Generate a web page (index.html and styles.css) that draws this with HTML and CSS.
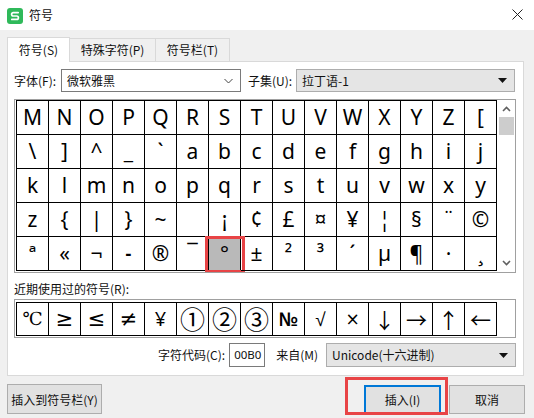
FILE: index.html
```html
<!DOCTYPE html>
<html lang="zh-CN">
<head>
    <meta charset="UTF-8">
    <meta name="viewport" content="width=device-width, initial-scale=1.0">
    <title>符号</title>
    <link rel="stylesheet" href="styles.css">
</head>
<body>
    <div class="titlebar">
        <svg class="app-icon" width="16" height="16" viewBox="0 0 16 16">
            <rect x="0" y="0" width="16" height="16" rx="3" fill="#2fb95a"/>
            <path d="M11.2 4.6 H6.3 a1.7 1.7 0 0 0 0 3.4 h3.4 a1.7 1.7 0 0 1 0 3.4 H4.8" fill="none" stroke="#fff" stroke-width="1.7" stroke-linecap="round"/>
        </svg>
        <span class="title">符号</span>
        <svg class="close" width="11" height="11" viewBox="0 0 11 11">
            <path d="M0.5 0.5 L10.5 10.5 M10.5 0.5 L0.5 10.5" stroke="#222" stroke-width="1"/>
        </svg>
    </div>

    <div class="content">
        <div class="tabs">
            <div class="tab active">符号(S)</div>
            <div class="tab tab-special">特殊字符(P)</div>
            <div class="tab tab-bar">符号栏(T)</div>
        </div>

        <div class="panel">
            <div class="font-row">
                <span class="lbl lbl-font">字体(F):</span>
                <div class="combo combo-font">
                    <span>微软雅黑</span>
                    <svg width="9" height="6" viewBox="0 0 9 6"><path d="M0.5 1 L4.5 5 L8.5 1" fill="none" stroke="#444" stroke-width="1"/></svg>
                </div>
                <span class="lbl lbl-subset">子集(U):</span>
                <div class="combo combo-gray combo-subset">
                    <span>拉丁语-1</span>
                    <svg width="9" height="5" viewBox="0 0 9 5"><path d="M0 0 H9 L4.5 5 Z" fill="#111"/></svg>
                </div>
            </div>

            <div class="charbox">
                <div class="chargrid">
                    <span>M</span><span>N</span><span>O</span><span>P</span><span>Q</span><span>R</span><span>S</span><span>T</span><span>U</span><span>V</span><span>W</span><span>X</span><span>Y</span><span>Z</span><span>[</span>
                    <span>\</span><span>]</span><span>^</span><span>_</span><span>`</span><span>a</span><span>b</span><span>c</span><span>d</span><span>e</span><span>f</span><span>g</span><span>h</span><span>i</span><span>j</span>
                    <span>k</span><span>l</span><span>m</span><span>n</span><span>o</span><span>p</span><span>q</span><span>r</span><span>s</span><span>t</span><span>u</span><span>v</span><span>w</span><span>x</span><span>y</span>
                    <span>z</span><span>{</span><span>|</span><span>}</span><span>~</span><span></span><span>¡</span><span>¢</span><span>£</span><span>¤</span><span>¥</span><span>¦</span><span>§</span><span>¨</span><span>©</span>
                    <span>ª</span><span>«</span><span>¬</span><span class="shy">-</span><span>®</span><span>¯</span><span class="selected">°</span><span>±</span><span>²</span><span>³</span><span>´</span><span>µ</span><span>¶</span><span>·</span><span>¸</span>
                </div>
                <div class="scrollbar">
                    <svg class="arrow" width="9" height="6" viewBox="0 0 9 6"><path d="M1 5 L4.5 1.5 L8 5" fill="none" stroke="#606060" stroke-width="1.6"/></svg>
                    <div class="thumb"></div>
                    <svg class="arrow arrow-down" width="9" height="6" viewBox="0 0 9 6"><path d="M1 1 L4.5 4.5 L8 1" fill="none" stroke="#606060" stroke-width="1.6"/></svg>
                </div>
            </div>

            <div class="recent-label">近期使用过的符号(R):</div>
            <div class="recentbox">
                <div class="chargrid recent">
                    <span class="serif">℃</span><span class="math">≥</span><span class="math">≤</span><span class="math">≠</span><span>¥</span><span class="circled">①</span><span class="circled">②</span><span class="circled">③</span><span class="numero">№</span><span class="root">√</span><span class="times">×</span><span class="arrow-ch">↓</span><span class="arrow-ch">→</span><span class="arrow-ch">↑</span><span class="arrow-ch">←</span>
                </div>
            </div>

            <div class="code-row">
                <span class="lbl">字符代码(C):</span>
                <div class="code-input">00B0</div>
                <span class="lbl lbl-from">来自(M)</span>
                <div class="combo combo-gray combo-from">
                    <span>Unicode(十六进制)</span>
                    <svg width="9" height="5" viewBox="0 0 9 5"><path d="M0 0 H9 L4.5 5 Z" fill="#111"/></svg>
                </div>
            </div>
        </div>

        <div class="footer">
            <button class="btn btn-bar">插入到符号栏(Y)</button>
            <div class="spacer"></div>
            <button class="btn btn-insert">插入(I)</button>
            <button class="btn btn-cancel">取消</button>
        </div>
    </div>
</body>
</html>
```

FILE: styles.css
```css
* {
    box-sizing: border-box;
}

body {
    margin: 0;
    width: 534px;
    height: 418px;
    overflow: hidden;
    background-color: #f0f0f0;
    font-family: "Noto Sans CJK SC", "Noto Sans", sans-serif;
    font-size: 12px;
    color: #111;
}

/* title bar */
.titlebar {
    height: 30px;
    background-color: #fff;
    display: flex;
    align-items: center;
    padding-left: 7px;
}
.app-icon {
    margin-top: 1px;
}
.title {
    margin-left: 6px;
    font-size: 12px;
    line-height: 16px;
}
.close {
    margin-left: auto;
    margin-right: 11px;
    margin-top: -1px;
}

.content {
    padding: 7px 10px 0 7px;
}

/* tabs */
.tabs {
    display: flex;
    align-items: flex-end;
    height: 24px;
    position: relative;
    z-index: 1;
}
.tab {
    height: 23px;
    border: 1px solid #d9d9d9;
    border-bottom: none;
    background-color: #f0f0f0;
    text-align: center;
    line-height: 22px;
    margin-left: -1px;
}
.tab.active {
    width: 63px;
    height: 25px;
    margin-left: 0;
    margin-bottom: -1px;
    background-color: #fff;
    line-height: 24px;
}
.tab-special {
    width: 87px;
}
.tab-bar {
    width: 75px;
}

.panel {
    width: 517px;
    height: 315px;
    background-color: #fff;
    border: 1px solid #d9d9d9;
    padding: 7px 7px 0 6px;
}

/* font / subset row */
.font-row {
    display: flex;
    align-items: center;
    height: 23px;
}
.lbl {
    white-space: nowrap;
    line-height: 16px;
}
.lbl-font {
    width: 47px;
}
.lbl-subset {
    width: 48px;
    margin-left: 7px;
}
.combo {
    height: 23px;
    display: flex;
    align-items: center;
    justify-content: space-between;
    border: 1px solid #7a7a7a;
    background-color: #fff;
    padding: 0 7px 0 5px;
    line-height: 16px;
}
.combo-font {
    width: 180px;
}
.combo-gray {
    background-color: #e5e5e5;
    border-color: #adadad;
}
.combo-subset {
    width: 219px;
    padding-right: 7px;
}

/* character table */
.charbox {
    margin-top: 7px;
    width: 502px;
    height: 174px;
    border: 1px solid #a0a0a0;
    padding-left: 1px;
    display: flex;
    overflow: hidden;
}
.chargrid {
    display: grid;
    grid-template-columns: repeat(15, 32px);
    grid-auto-rows: 34px;
    width: 481px;
    border-top: 1px solid #000;
    border-left: 1px solid #000;
    align-self: flex-start;
}
.chargrid span {
    border-right: 1px solid #000;
    border-bottom: 1px solid #000;
    text-align: center;
    font-family: "Noto Sans", "DejaVu Sans", sans-serif;
    font-size: 21px;
    line-height: 33px;
    color: #000;
    position: relative;
}
.chargrid .shy {
    font-weight: bold;
    font-size: 18px;
}
.chargrid .selected {
    background-color: #b9b9b9;
    border-color: #000;
}
/* red marker drawn over the selected cell */
.chargrid .selected::after {
    content: "";
    position: absolute;
    left: -4px;
    right: -5px;
    top: -1px;
    bottom: -3px;
    border: 3px solid #e84446;
}

.scrollbar {
    width: 18px;
    background-color: #fff;
    display: flex;
    flex-direction: column;
    align-items: center;
    padding-left: 1px;
}
.arrow {
    margin-top: 6px;
    margin-bottom: 5px;
}
.thumb {
    width: 15px;
    height: 18px;
    background-color: #cdcdcd;
}
.arrow-down {
    margin-top: auto;
    margin-bottom: 6px;
}

.recent-label {
    margin-top: 6px;
    line-height: 20px;
    height: 20px;
}

.recentbox {
    width: 502px;
    height: 39px;
    border: 1px solid #a0a0a0;
    padding: 2px 0 0 1px;
}
.chargrid.recent {
    grid-auto-rows: 33px;
}
.chargrid.recent span {
    font-family: "Noto Sans", sans-serif;
    font-size: 20px;
    line-height: 32px;
}
.chargrid.recent .serif {
    font-family: "DejaVu Serif", "Liberation Serif", serif;
    font-size: 18px;
}
.chargrid.recent .math {
    font-family: "DejaVu Sans", sans-serif;
    font-size: 21px;
}
.chargrid.recent .circled {
    font-family: "Noto Sans CJK SC", sans-serif;
    font-size: 25px;
    line-height: 31px;
}
.chargrid.recent .numero {
    font-family: "Noto Sans", sans-serif;
    font-size: 19px;
    font-weight: 600;
}
.chargrid.recent .root {
    font-family: "DejaVu Sans", sans-serif;
    font-size: 19px;
    font-weight: 300;
}
.chargrid.recent .times {
    font-family: "DejaVu Sans", sans-serif;
    font-size: 17px;
}
.chargrid.recent .arrow-ch {
    font-family: "Noto Sans CJK SC", sans-serif;
    font-size: 21px;
}

/* code row */
.code-row {
    margin-top: 5px;
    height: 24px;
    display: flex;
    align-items: center;
    justify-content: flex-end;
}
.code-input {
    width: 36px;
    height: 24px;
    margin-left: 4px;
    border: 1px solid #7a7a7a;
    padding-left: 4px;
    line-height: 22px;
    font-family: "Noto Sans", sans-serif;
    font-size: 11.5px;
    white-space: nowrap;
    overflow: hidden;
}
.lbl-from {
    margin-left: 11px;
    margin-right: 8px;
}
.combo-from {
    width: 190px;
    height: 24px;
}

/* buttons */
.footer {
    display: flex;
    margin-top: 8px;
    margin-right: -1px;
    height: 30px;
}
.spacer {
    flex: 1;
}
.btn {
    height: 30px;
    background-color: #e1e1e1;
    border: 1px solid #adadad;
    font-family: "Noto Sans CJK SC", sans-serif;
    font-size: 12px;
    color: #111;
    padding: 0;
}
.btn-bar {
    width: 95px;
}
.btn-insert {
    width: 77px;
    border: 2px solid #0078d7;
    position: relative;
    margin-top: 1px;
    height: 29px;
}
/* red marker drawn around the insert button */
.btn-insert::after {
    content: "";
    position: absolute;
    left: -21px;
    right: -9px;
    top: -10px;
    bottom: -3px;
    border: 3px solid #e84446;
}
.btn-cancel {
    width: 76px;
    margin-left: 8px;
    margin-top: 1px;
    height: 29px;
}
```
